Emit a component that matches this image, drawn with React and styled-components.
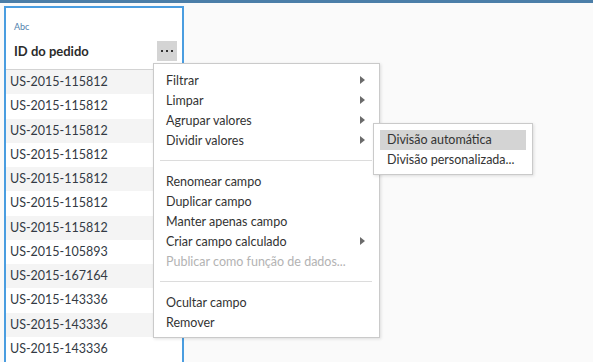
import React from "react";
import styled, { createGlobalStyle } from "styled-components";

const GlobalStyle = createGlobalStyle`
  html, body {
    margin: 0;
    height: 362px;
    overflow: hidden;
    background: #fafafa;
    font-family: "Lato", "Noto Sans", sans-serif;
  }
`;

const Page = styled.div`
  display: flex;
  flex-direction: column;
  height: 362px;
  overflow: hidden;
`;

const TopBar = styled.div`
  flex-shrink: 0;
  height: 3px;
  background: #4b7ea8;
`;

const Canvas = styled.div`
  position: relative;
  flex: 1;
  min-height: 0;
  display: flex;
  align-items: flex-start;
  padding: 3px 0 0 4px;
`;

const Column = styled.div`
  box-sizing: border-box;
  flex-shrink: 0;
  width: 180px;
  height: 420px;
  background: #ffffff;
  border: 2px solid #4a9de0;
  display: flex;
  flex-direction: column;
`;

const Header = styled.div`
  box-sizing: border-box;
  flex-shrink: 0;
  height: 62px;
  padding: 13px 5px 0 8px;
  border-bottom: 1px solid #d3d3d3;
  display: flex;
  flex-direction: column;
  gap: 8px;
`;

const TypeLabel = styled.div`
  font-size: 9px;
  line-height: 12px;
  color: #4f82ad;
`;

const TitleRow = styled.div`
  display: flex;
  align-items: center;
  justify-content: space-between;
  height: 20px;
`;

const Title = styled.div`
  font-size: 13px;
  font-weight: 700;
  color: #2b2b2b;
`;

const MoreButton = styled.div`
  width: 20px;
  height: 20px;
  background: #d4d4d4;
  display: flex;
  align-items: center;
  justify-content: center;
`;

const Row = styled.div`
  flex-shrink: 0;
  height: 24.25px;
  line-height: 24.25px;
  padding-left: 4px;
  font-size: 12.5px;
  color: #333a44;
  background: ${(p) => (p.$odd ? "#f4f4f4" : "#ffffff")};
`;

const Menu = styled.div`
  position: absolute;
  left: 153px;
  top: 60px;
  width: 227px;
  box-sizing: border-box;
  background: #ffffff;
  border: 1px solid #cacaca;
  box-shadow: 1px 1px 3px rgba(0, 0, 0, 0.12);
  padding: 6px 0 5px;
`;

const Item = styled.div`
  position: relative;
  height: 20px;
  display: flex;
  align-items: center;
  justify-content: space-between;
  padding: 0 14px 0 12px;
  font-size: 12.5px;
  color: ${(p) => (p.$disabled ? "#b3b3b3" : "#333333")};
`;

const Arrow = styled.span`
  width: 0;
  height: 0;
  border-top: 4px solid transparent;
  border-bottom: 4px solid transparent;
  border-left: 5px solid #6b6b6b;
`;

const Separator = styled.div`
  height: 1px;
  margin: 10px 7px 10px 6px;
  background: #dcdcdc;
`;

const SubMenu = styled.div`
  position: absolute;
  left: 219px;
  top: -7px;
  width: 160px;
  box-sizing: border-box;
  background: #ffffff;
  border: 1px solid #cacaca;
  box-shadow: 1px 1px 3px rgba(0, 0, 0, 0.12);
  padding: 6px 6px 4px;
`;

const SubItem = styled.div`
  height: 20px;
  line-height: 20px;
  padding-left: 7px;
  font-size: 12.5px;
  color: #333333;
  white-space: nowrap;
  background: ${(p) => (p.$active ? "#d4d4d4" : "transparent")};
`;

const ids = [
  "US-2015-115812",
  "US-2015-115812",
  "US-2015-115812",
  "US-2015-115812",
  "US-2015-115812",
  "US-2015-115812",
  "US-2015-115812",
  "US-2015-105893",
  "US-2015-167164",
  "US-2015-143336",
  "US-2015-143336",
  "US-2015-143336",
];

const Dots = () => (
  <svg width="12" height="4" viewBox="0 0 12 4">
    <rect x="0" y="1" width="2" height="2" fill="#333" />
    <rect x="5" y="1" width="2" height="2" fill="#333" />
    <rect x="10" y="1" width="2" height="2" fill="#333" />
  </svg>
);

const App = () => {
  return (
    <Page>
      <GlobalStyle />
      <TopBar />
      <Canvas>
        <Column>
          <Header>
            <TypeLabel>Abc</TypeLabel>
            <TitleRow>
              <Title>ID do pedido</Title>
              <MoreButton>
                <Dots />
              </MoreButton>
            </TitleRow>
          </Header>
          {ids.map((id, i) => (
            <Row key={i} $odd={i % 2 === 0}>
              {id}
            </Row>
          ))}
        </Column>

        <Menu>
          <Item>
            Filtrar <Arrow />
          </Item>
          <Item>
            Limpar <Arrow />
          </Item>
          <Item>
            Agrupar valores <Arrow />
          </Item>
          <Item>
            Dividir valores <Arrow />
            <SubMenu>
              <SubItem $active>Divisão automática</SubItem>
              <SubItem>Divisão personalizada...</SubItem>
            </SubMenu>
          </Item>
          <Separator />
          <Item>Renomear campo</Item>
          <Item>Duplicar campo</Item>
          <Item>Manter apenas campo</Item>
          <Item>
            Criar campo calculado <Arrow />
          </Item>
          <Item $disabled>Publicar como função de dados...</Item>
          <Separator />
          <Item>Ocultar campo</Item>
          <Item>Remover</Item>
        </Menu>
      </Canvas>
    </Page>
  );
};

export default App;
